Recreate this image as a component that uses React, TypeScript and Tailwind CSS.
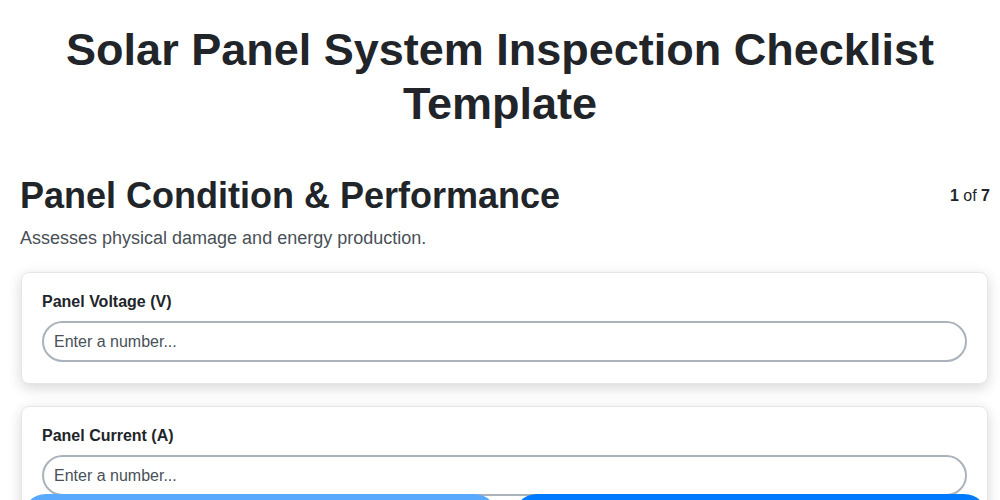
import React from "react";

function Field({ label }: { label: string }) {
  return (
    <div className="rounded-lg border border-[#e4e6ea] bg-white px-[20px] pt-[19px] pb-[21px] shadow-[0_4px_14px_rgba(0,0,0,0.16)]">
      <label className="mb-[10px] block text-[16px] font-bold leading-[19px] text-[#212529]">{label}</label>
      <input
        type="text"
        placeholder="Enter a number..."
        className="block h-[41px] w-full rounded-full border-2 border-[#aab2bb] bg-white px-[10px] text-[16px] text-[#212529] placeholder:text-[#495057] outline-none"
      />
    </div>
  );
}

export default function App() {
  return (
    <div className="min-h-screen bg-white font-['Liberation_Sans',Arial,sans-serif] text-[#212529]">
      <h1 className="pt-[23px] text-center text-[45px] font-bold leading-[54px]">
        Solar Panel System Inspection Checklist
        <br />
        Template
      </h1>
      <div className="pl-[20px] pr-[10px] pt-[43px]">
        <div className="flex items-center justify-between">
          <h2 className="text-[36px] font-bold leading-[43px]">Panel Condition &amp; Performance</h2>
          <div className="text-[16px]">
            <span className="font-bold">1</span> of <span className="font-bold">7</span>
          </div>
        </div>
        <p className="mt-[10px] text-[18px] leading-[22px] text-[#495057]">Assesses physical damage and energy production.</p>
      </div>
      <div className="mt-[23px] ml-[21px] mr-[12px] flex flex-col gap-[22px]">
        <Field label="Panel Voltage (V)" />
        <Field label="Panel Current (A)" />
      </div>
      <div className="fixed left-0 right-0 top-[494px] flex gap-[15px] pl-[22px] pr-[12px]">
        <button className="flex h-[48px] flex-1 items-center justify-center rounded-full bg-[#59a9ff] text-[16px] font-bold text-white">Previous</button>
        <button className="flex h-[48px] flex-1 items-center justify-center rounded-full bg-[#007bff] text-[16px] font-bold text-white">Next</button>
      </div>
    </div>
  );
}
